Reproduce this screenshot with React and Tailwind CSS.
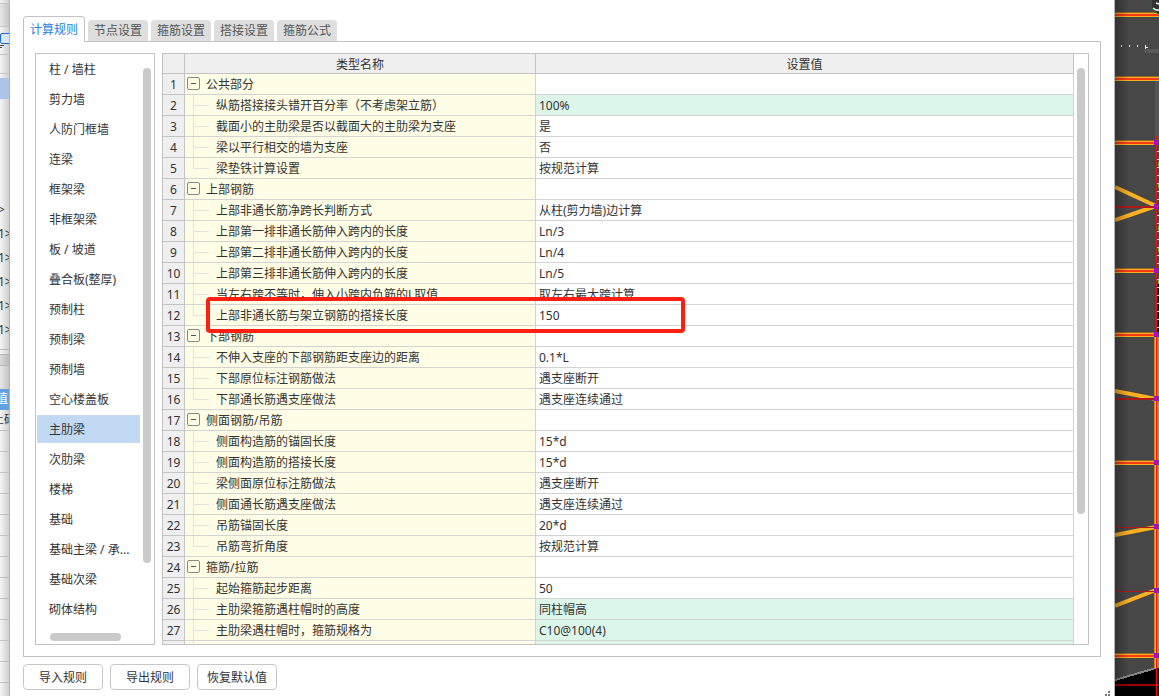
import { useState } from "react";
import clsx from "clsx";

const TABS = ["计算规则", "节点设置", "箍筋设置", "搭接设置", "箍筋公式"];

const CATEGORIES = [
  "柱 / 墙柱",
  "剪力墙",
  "人防门框墙",
  "连梁",
  "框架梁",
  "非框架梁",
  "板 / 坡道",
  "叠合板(整厚)",
  "预制柱",
  "预制梁",
  "预制墙",
  "空心楼盖板",
  "主肋梁",
  "次肋梁",
  "楼梯",
  "基础",
  "基础主梁 / 承...",
  "基础次梁",
  "砌体结构",
];

const ROWS = [
  { name: "公共部分", group: true },
  { name: "纵筋搭接接头错开百分率（不考虑架立筋）", value: "100%", changed: true },
  { name: "截面小的主肋梁是否以截面大的主肋梁为支座", value: "是" },
  { name: "梁以平行相交的墙为支座", value: "否" },
  { name: "梁垫铁计算设置", value: "按规范计算", last: true },
  { name: "上部钢筋", group: true },
  { name: "上部非通长筋净跨长判断方式", value: "从柱(剪力墙)边计算" },
  { name: "上部第一排非通长筋伸入跨内的长度", value: "Ln/3" },
  { name: "上部第二排非通长筋伸入跨内的长度", value: "Ln/4" },
  { name: "上部第三排非通长筋伸入跨内的长度", value: "Ln/5" },
  { name: "当左右跨不等时，伸入小跨内负筋的L取值", value: "取左右最大跨计算" },
  { name: "上部非通长筋与架立钢筋的搭接长度", value: "150", last: true, marked: true },
  { name: "下部钢筋", group: true },
  { name: "不伸入支座的下部钢筋距支座边的距离", value: "0.1*L" },
  { name: "下部原位标注钢筋做法", value: "遇支座断开" },
  { name: "下部通长筋遇支座做法", value: "遇支座连续通过", last: true },
  { name: "侧面钢筋/吊筋", group: true },
  { name: "侧面构造筋的锚固长度", value: "15*d" },
  { name: "侧面构造筋的搭接长度", value: "15*d" },
  { name: "梁侧面原位标注筋做法", value: "遇支座断开" },
  { name: "侧面通长筋遇支座做法", value: "遇支座连续通过" },
  { name: "吊筋锚固长度", value: "20*d" },
  { name: "吊筋弯折角度", value: "按规范计算", last: true },
  { name: "箍筋/拉筋", group: true },
  { name: "起始箍筋起步距离", value: "50" },
  { name: "主肋梁箍筋遇柱帽时的高度", value: "同柱帽高", changed: true },
  { name: "主肋梁遇柱帽时，箍筋规格为", value: "C10@100(4)", changed: true },
  { name: "", value: "", changed: true, blank: true },
];

const STRIP_ROWS = [">", "1>", "1>", "1>", "1>", "1>"];
const STRIP_LINES = Array.from({ length: 13 }, (_, i) => i);

const BEAMS = [14, 78, 142, 270, 334, 462, 655];
const NODES = [142, 206, 270, 334, 398, 462, 526, 590, 655];
const TICKS = [151, 159, 167, 175, 183, 191, 199, 215, 223, 231, 239, 247, 255, 263, 279, 287, 295, 303, 311, 319, 327];

// Slice of the property panel that sits behind the dialog
function PropertyStrip() {
  return (
    <aside className="flex w-[9px] shrink-0 flex-col overflow-hidden whitespace-nowrap bg-linear-to-r from-[#f5f5f5] to-[#cfcfcf]">
      <div className="h-1 shrink-0 border-b border-[#c4c4c4]" />
      <div className="h-[23px] shrink-0 border-b border-[#c4c4c4] bg-black/5" />
      <div className="h-7 shrink-0 border-b border-[#c4c4c4] pt-1.5">
        <svg width="9" height="18" viewBox="0 0 9 18" fill="none" aria-hidden="true">
          <path d="M9 .5H2Q.5 .5 .5 2V8.500Q.5 10.500 2 10.500H9" stroke="#1767d2" fill="#dbe7f7" />
          <path d="M0 12.500H4M0 14.500H2" stroke="#444" />
        </svg>
      </div>
      <div className="h-[19px] shrink-0 border-b border-[#c4c4c4]" />
      <div className="mt-1 h-[21px] shrink-0 bg-[#a9c4e6]" />
      <div className="h-[99px] shrink-0" />
      {STRIP_ROWS.map((text, i) => (
        <div key={i} className="-ml-0.5 h-6 shrink-0 leading-6">
          {text}
        </div>
      ))}
      <div className="h-2 shrink-0 border-b border-[#b5b5b5]" />
      <div className="mt-1 h-3 shrink-0 border-y border-[#b5b5b5] bg-black/10" />
      <div className="h-[23px] shrink-0 bg-black/5" />
      <div className="-ml-1 h-[21px] shrink-0 bg-[#62a0e0] leading-5 text-white">值</div>
      <div className="-ml-2 h-[21px] shrink-0 border-b border-[#c0c0c0] leading-5">土码</div>
      {STRIP_LINES.map((i) => (
        <div key={i} className="h-[21px] shrink-0 border-b border-[#c0c0c0]" />
      ))}
    </aside>
  );
}

// Slice of the drawing canvas to the right of the dialog
function DrawingStrip() {
  return (
    <aside className="w-11 shrink-0 overflow-hidden bg-[#474747]">
      <svg width="44" height="696" viewBox="0 0 44 696" shapeRendering="crispEdges" aria-hidden="true">
        <defs>
          <linearGradient id="edge" x1="0" x2="1" y1="0" y2="0">
            <stop offset="0" stopColor="#000" stopOpacity=".3" />
            <stop offset="1" stopColor="#000" stopOpacity="0" />
          </linearGradient>
        </defs>
        <rect width="44" height="696" fill="#474747" />
        <rect x="40" y="81" width="4" height="60" fill="#555" />
        <path d="M0 680 41 668H44V696H0Z" fill="#000" />
        <path d="M0 680 41 668" stroke="#888" strokeWidth="2" />
        <path d="M0 685H44" stroke="#a00000" strokeWidth="2" />
        <g stroke="#fdb022" strokeWidth="4" fill="none" shapeRendering="auto">
          <path d="M0 187 41 206" />
          <path d="M0 220 41 206" />
          <path d="M0 391 41 399" />
          <path d="M0 535 41 527" />
          <path d="M0 606 41 590" />
        </g>
        <g fill="#b01818">
          <rect y="206" width="41" height="2" />
          <rect y="398" width="41" height="2" />
          <rect y="527" width="41" height="1" />
          <rect y="591" width="41" height="1" />
        </g>
        {BEAMS.map((y) => (
          <g key={y}>
            <rect y={y - 2} width={y < 100 ? 44 : 41} height="5" fill="#8f6a26" />
            <rect y={y - 1} width={y < 100 ? 44 : 41} height="4" fill="#fdb022" />
            <rect y={y} width={y < 100 ? 44 : 41} height="2" fill="#ff3a10" />
          </g>
        ))}
        <rect x="42" y="284" width="2" height="50" fill="#000" />
        <rect x="39" y="334" width="5" height="334" fill="#d08a18" />
        <rect x="40" y="334" width="1" height="334" fill="#fdb022" />
        {TICKS.map((y) => (
          <rect key={y} x="42" y={y} width="2" height="1" fill="#eee" />
        ))}
        <g fill="#16e516">
          <rect x="43" y="162" width="1" height="4" />
          <rect x="43" y="184" width="1" height="4" />
          <rect x="43" y="226" width="1" height="4" />
          <rect x="43" y="248" width="1" height="4" />
          <rect x="43" y="280" width="1" height="4" />
        </g>
        <rect x="41" y="136" width="1" height="560" fill="#ff0808" />
        {NODES.map((y) => (
          <g key={y}>
            <rect x="39" y={y - 2} width="5" height="5" fill="#8a10e0" />
            <rect x="40" y={y - 1} width="3" height="3" fill="#d8087a" />
          </g>
        ))}
        <g fill="#eee">
          <rect x="6" y="45" width="1" height="2" />
          <rect x="14" y="45" width="1" height="2" />
          <rect x="22" y="45" width="1" height="2" />
          <path d="M30 45h1v2h2v1h-2v1h-1z" />
        </g>
        <rect x="32" y="49" width="12" height="4" fill="#5a5a5a" />
        <rect x="30" y="49" width="1" height="4" fill="#2f7f9f" />
        <g shapeRendering="auto" fill="none">
          <circle cx="46" cy="4" r="10" fill="#333" stroke="#0b7a0b" />
          <path d="M41 3l3 1M38 8l3 2h3" stroke="#fff" strokeWidth="1.5" />
        </g>
        <rect width="14" height="696" fill="url(#edge)" />
      </svg>
    </aside>
  );
}

function TreeGuide({ last }) {
  return (
    <svg className="ml-2 shrink-0 self-start" width="23" height="20" viewBox="0 0 23 20" fill="none" aria-hidden="true">
      <path d={last ? "M.5 0V10.500H16" : "M.5 0V20M.5 10.500H16"} stroke="#e2e2e2" />
    </svg>
  );
}

function GroupToggle({ name }) {
  return (
    <button
      type="button"
      aria-label={`折叠${name}`}
      className="mt-[3px] mr-1.5 ml-0.5 flex size-[13px] shrink-0 items-center justify-center self-start rounded-xs border border-[#8a8a80]"
    >
      <span className="h-px w-[5px] bg-[#555]" />
    </button>
  );
}

function RuleTable() {
  return (
    <div className="flex min-w-0 flex-1 overflow-hidden border border-[#c3c3c3]">
      <table className="h-fit min-w-0 flex-1 table-fixed border-separate border-spacing-0">
        <colgroup>
          <col className="w-[22px]" />
          <col className="w-[351px]" />
          <col />
        </colgroup>
        <thead>
          <tr className="h-5 bg-[#efefef]">
            <th className="border-r border-b border-[#c3c3c3] p-0" aria-label="序号" />
            <th className="border-r border-b border-[#c3c3c3] p-0 pt-0.5 font-normal leading-[17px]">类型名称</th>
            <th className="border-r border-b border-[#c3c3c3] p-0 pt-0.5 font-normal leading-[17px]">设置值</th>
          </tr>
        </thead>
        <tbody>
          {ROWS.map((row, i) => (
            <tr key={i} className="h-[21px]">
              <td className="border-r border-b border-[#c3c3c3] bg-[#efefef] p-0 pt-0.5 text-center leading-[18px]">
                {row.blank ? "" : i + 1}
              </td>
              <td className="border-r border-b border-[#d3d3d3] bg-[#fffde6] p-0">
                <div className="relative flex h-5 whitespace-nowrap leading-[18px]">
                  {row.group ? <GroupToggle name={row.name} /> : <TreeGuide last={row.last} />}
                  <span className="pt-0.5">{row.name}</span>
                  {row.marked && (
                    <span className="pointer-events-none absolute -top-2 left-[21px] z-10 h-9 w-[479px] rounded-sm border-4 border-[#ff2013]" />
                  )}
                </div>
              </td>
              <td
                className={clsx(
                  "border-r border-b border-[#d3d3d3] p-0 pt-0.5 pl-[3px] leading-[18px]",
                  row.changed && "bg-[#dcf6ea]"
                )}
              >
                {row.value}
              </td>
            </tr>
          ))}
        </tbody>
      </table>
      <div className="flex w-3.5 shrink-0 justify-center pt-3.5">
        <div className="h-[446px] w-2 rounded-full bg-[#cacaca]" />
      </div>
    </div>
  );
}

function CategoryList() {
  const [selected, setSelected] = useState("主肋梁");

  return (
    <div className="flex w-[120px] shrink-0 flex-col overflow-hidden border border-[#c3c3c3]">
      <div className="flex min-h-0 flex-1">
        <ul className="flex min-w-0 flex-1 flex-col gap-0.5 overflow-hidden pt-px pl-px">
          {CATEGORIES.map((item) => (
            <li key={item} className="h-7 shrink-0">
              <button
                type="button"
                onClick={() => setSelected(item)}
                className={clsx(
                  "h-7 w-full whitespace-nowrap pt-0.5 pl-3 text-left",
                  selected === item && "bg-[#c1d9f2]"
                )}
              >
                {item}
              </button>
            </li>
          ))}
        </ul>
        <div className="flex w-3.5 shrink-0 justify-center pt-3.5">
          <div className="h-[495px] w-2 rounded-full bg-[#cacaca]" />
        </div>
      </div>
      <div className="h-[11px] shrink-0 pl-3.5">
        <div className="h-2 w-[71px] rounded-full bg-[#cacaca]" />
      </div>
    </div>
  );
}

export default function App() {
  const [tab, setTab] = useState(TABS[0]);

  return (
    <div className="flex h-screen overflow-hidden font-['Noto_Sans','Noto_Sans_CJK_SC',sans-serif] text-xs text-[#333]">
      <PropertyStrip />

      <main className="flex min-w-0 flex-1 flex-col border-x border-[#b4b4b4] bg-white pt-4 pr-[13px] pb-1.5 pl-[13px]">
        <div role="tablist" className="z-10 flex items-end gap-[3px]">
          {TABS.map((name) => (
            <button
              key={name}
              type="button"
              role="tab"
              aria-selected={tab === name}
              onClick={() => setTab(name)}
              className={clsx(
                "rounded-t-sm",
                tab === name
                  ? "-mb-px h-[26px] w-[62px] border border-b-0 border-[#c3c3c3] bg-white text-[#2a7de1]"
                  : "h-[21px] w-[60px] bg-[#dedede] text-[#555]"
              )}
            >
              {name}
            </button>
          ))}
        </div>

        <section className="flex min-h-0 flex-1 gap-[7px] border border-[#c3c3c3] p-[11px]">
          <CategoryList />
          <RuleTable />
        </section>

        <footer className="flex gap-[7px] pt-[7px]">
          {["导入规则", "导出规则", "恢复默认值"].map((label) => (
            <button key={label} type="button" className="h-[26px] w-20 rounded-sm border border-[#c8c8c8] bg-white pt-0.5">
              {label}
            </button>
          ))}
          <svg className="mt-auto -mr-2.5 -mb-1.5 ml-auto" width="6" height="5" viewBox="0 0 6 5" fill="#777" aria-hidden="true">
            <path d="M3 0h2v2H3zM0 3h2v2H0zM3 3h2v2H3z" />
          </svg>
        </footer>
      </main>

      <DrawingStrip />
    </div>
  );
}
